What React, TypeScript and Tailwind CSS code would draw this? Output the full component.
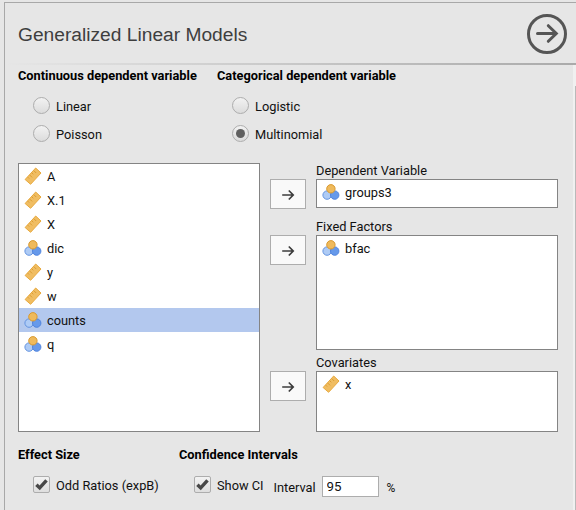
import type { ReactNode } from 'react';

type Kind = 'scale' | 'nominal';

function RulerIcon() {
  return (
    <svg width="18" height="18" viewBox="0 0 18 18" className="shrink-0">
      <path d="M1.1 12.5 11.7 1 17 6 6.6 17.3Z" fill="#f0bd62" stroke="#e8a93e" strokeWidth="1" strokeLinejoin="round" />
      <path d="m3.8 10.2 1.3 1.3M5.8 8.1l2.3 2.3M7.9 5.9l1.4 1.4M9.9 3.7 12.2 6" stroke="#dc9d32" strokeWidth="1" fill="none" />
    </svg>
  );
}

function NominalIcon() {
  return (
    <svg width="18" height="18" viewBox="0 0 18 18" className="shrink-0">
      <circle cx="5.1" cy="12.1" r="4.2" fill="#aecbf5" stroke="#6393e0" />
      <circle cx="12.7" cy="12.1" r="4.2" fill="#6699ea" stroke="#4e83df" />
      <circle cx="8.9" cy="5.8" r="4.2" fill="#efba5c" stroke="#d9992f" />
    </svg>
  );
}

function Row({ kind, name, selected }: { kind: Kind; name: string; selected?: boolean }) {
  return (
    <div className={`flex h-6 shrink-0 items-center gap-[5px] pl-[5px] ${selected ? 'bg-[#b3c8ee]' : ''}`}>
      {kind === 'scale' ? <RulerIcon /> : <NominalIcon />}
      <span className="pt-px">{name}</span>
    </div>
  );
}

function Radio({ label, on }: { label: string; on?: boolean }) {
  return (
    <div className="flex h-7 items-center gap-1.5">
      <span className="flex size-[17px] items-center justify-center rounded-full border border-[#adadad] bg-linear-to-b from-[#f2f2f2] to-[#dcdcdc]">
        {on && <span className="size-[9px] rounded-full bg-[#606060]" />}
      </span>
      <span className="pt-[3px]">{label}</span>
    </div>
  );
}

function Check({ label }: { label: string }) {
  return (
    <div className="flex h-[17px] items-center gap-1.5">
      <span className="flex size-[17px] items-center justify-center rounded-[2px] border border-[#adadad] bg-linear-to-b from-[#f3f3f3] to-[#dedede]">
        <svg width="15" height="15" viewBox="0 0 15 15">
          <path d="m2.4 7.7 3.3 3.2 6.8-7.6" fill="none" stroke="#484848" strokeWidth="3.4" />
        </svg>
      </span>
      <span className="pt-[2px]">{label}</span>
    </div>
  );
}

function Target({ label, height, children }: { label: string; height: string; children: ReactNode }) {
  return (
    <div className="flex gap-2.5">
      <div className="mt-4 flex h-[30px] w-9 items-center justify-center border border-[#adadad] bg-[#f9f9f9]">
        <svg width="14" height="14" viewBox="0 0 14 14" fill="none" stroke="#3c3c3c" strokeWidth="1.7">
          <path d="M1.2 8h10.8M7.8 3.5l4.4 4.5-4.4 4.5" />
        </svg>
      </div>
      <div className="w-[242px]">
        <div className="h-4 leading-4">{label}</div>
        <div className={`border border-[#848484] bg-white ${height}`}>{children}</div>
      </div>
    </div>
  );
}

const variables: { kind: Kind; name: string }[] = [
  { kind: 'scale', name: 'A' },
  { kind: 'scale', name: 'X.1' },
  { kind: 'scale', name: 'X' },
  { kind: 'nominal', name: 'dic' },
  { kind: 'scale', name: 'y' },
  { kind: 'scale', name: 'w' },
  { kind: 'nominal', name: 'counts' },
  { kind: 'nominal', name: 'q' },
];

export default function App() {
  return (
    <div className="h-[510px] w-[576px] overflow-hidden bg-[#e6e6e6] pl-1 pt-0.5 font-[Roboto,sans-serif] text-[12.8px] leading-4 text-[#111]">
      <div className="flex h-[508px] flex-col border-l border-t border-[#a8a8a8]">
        <header className="flex h-[60px] shrink-0 items-center justify-between pl-[13px] pr-[9px]">
          <h1 className="pt-[3px] font-['Liberation_Sans',sans-serif] text-[19.2px] leading-6 text-[#3e3e3e]">Generalized Linear Models</h1>
          <svg width="40" height="40" viewBox="0 0 40 40" className="mt-0.5" fill="none" stroke="#555">
            <circle cx="20" cy="20" r="18.5" strokeWidth="3" />
            <path d="M10.5 19.5h18M21.3 11.7l8 7.8-8 7.8" strokeWidth="3" strokeLinecap="round" />
          </svg>
        </header>
        <div className="h-0.5 shrink-0 bg-linear-to-r from-[#e6e6e6] to-[#aaa]" />
        <div className="flex flex-1">
          <main className="flex-1 pl-[13px]">
            <div className="flex pt-[3px]">
              <section className="w-[199px]">
                <h2 className="font-bold text-black">Continuous dependent variable</h2>
                <div className="pl-[15px] pt-[7px]">
                  <Radio label="Linear" />
                  <Radio label="Poisson" />
                </div>
              </section>
              <section>
                <h2 className="font-bold text-black">Categorical dependent variable</h2>
                <div className="pl-[15px] pt-[7px]">
                  <Radio label="Logistic" />
                  <Radio label="Multinomial" on />
                </div>
              </section>
            </div>
            <div className="mt-4 flex gap-2.5">
              <div className="h-[269px] w-[242px] border border-[#848484] bg-white">
                {variables.map((v) => (
                  <Row key={v.name} kind={v.kind} name={v.name} selected={v.name === 'counts'} />
                ))}
              </div>
              <div className="flex flex-col">
                <Target label="Dependent Variable" height="h-[29px]">
                  <Row kind="nominal" name="groups3" />
                </Target>
                <div className="h-[10px]" />
                <Target label="Fixed Factors" height="h-[115px]">
                  <Row kind="nominal" name="bfac" />
                </Target>
                <div className="h-[5px]" />
                <Target label="Covariates" height="h-[61px]">
                  <Row kind="scale" name="x" />
                </Target>
              </div>
            </div>
            <div className="mt-[15px] flex">
              <section className="w-[161px]">
                <h2 className="font-bold text-black">Effect Size</h2>
                <div className="pl-[15px] pt-[13px]">
                  <Check label="Odd Ratios (expB)" />
                </div>
              </section>
              <section>
                <h2 className="font-bold text-black">Confidence Intervals</h2>
                <div className="flex items-start pl-[15px] pt-[13px]">
                  <Check label="Show CI" />
                  <span className="ml-2.5 w-[42px] pt-1">Interval</span>
                  <input defaultValue="95" className="ml-[6px] h-[21px] w-[57px] border border-[#adadad] bg-white px-1 text-[13.3px] outline-none" />
                  <span className="ml-2 pt-1 text-[12px]">%</span>
                </div>
              </section>
            </div>
          </main>
          <div className="flex w-[3px] flex-col items-end bg-[#f0f0f0]">
            <div className="mt-[21px] w-px flex-1 bg-[#b9b9b9]" />
          </div>
        </div>
      </div>
    </div>
  );
}
